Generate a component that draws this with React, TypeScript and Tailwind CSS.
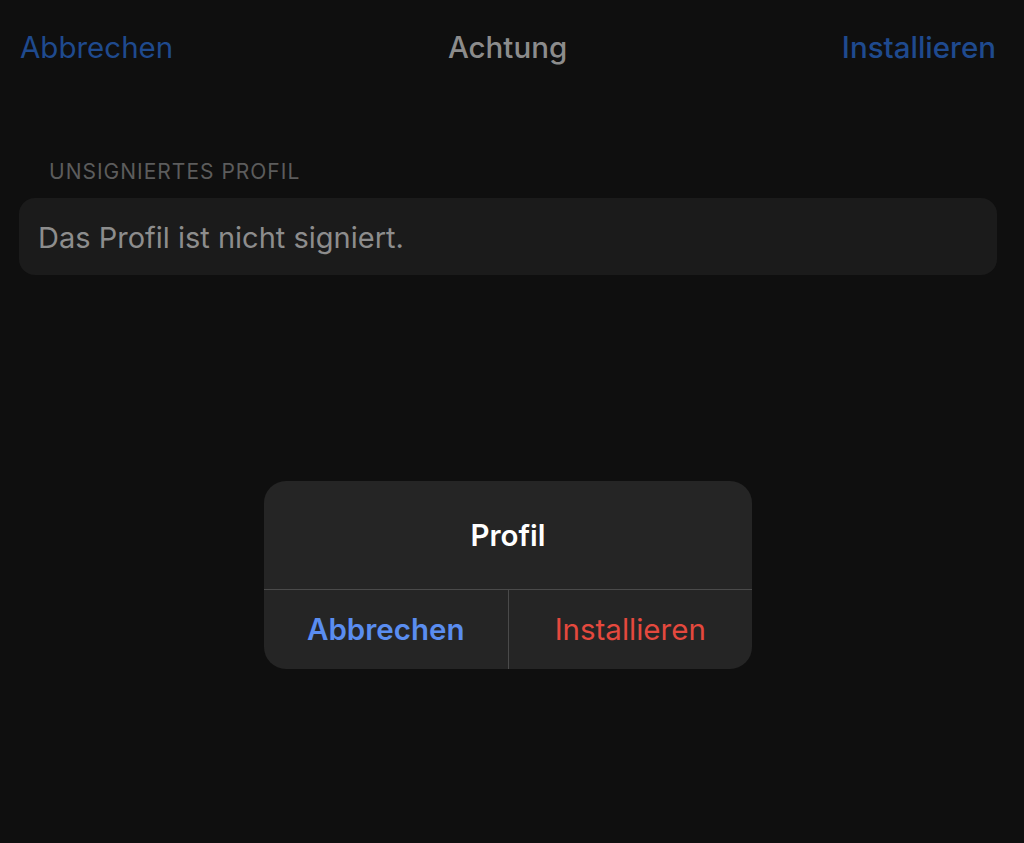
export default function App() {
  return (
    <div
      className="relative h-[843px] w-[1024px] overflow-hidden bg-[#0f0f0f]"
      style={{ fontFamily: "Inter, 'Noto Sans', sans-serif" }}
    >
      {/* nav bar */}
      <div className="flex h-[96px] items-center justify-between pl-[20px] pr-[28px] pb-[2px] text-[29.5px]">
        <span className="text-[#1f4a8e]">Abbrechen</span>
        <span className="font-medium text-[#8c8c8c]">Achtung</span>
        <span className="font-medium text-[#1f4a8e]">Installieren</span>
      </div>

      <div className="pl-[19px] pr-[27px] pt-[64px]">
        <p className="pl-[30px] text-[21px] leading-[24px] tracking-[1px] text-[#5c5c5c]">
          UNSIGNIERTES PROFIL
        </p>
        <div className="mt-[14px] flex h-[77px] items-center rounded-[16px] bg-[#1b1b1b] px-[19px] pt-[2px]">
          <span className="text-[29px] text-[#8d8d8d]">Das Profil ist nicht signiert.</span>
        </div>
      </div>

      {/* alert */}
      <div className="absolute left-[264px] top-[481px] w-[488px] overflow-hidden rounded-[22px] bg-[#252525]">
        <div className="flex h-[108px] items-center justify-center">
          <span className="text-[29.5px] font-semibold text-white">Profil</span>
        </div>
        <div className="flex h-[80px] border-t border-[#4a4a4a] text-[29.5px]">
          <button className="flex flex-1 items-center justify-center border-r border-[#4a4a4a] font-semibold text-[#5a8df0]">
            Abbrechen
          </button>
          <button className="flex flex-1 items-center justify-center text-[#e5493e]">
            Installieren
          </button>
        </div>
      </div>
    </div>
  );
}
